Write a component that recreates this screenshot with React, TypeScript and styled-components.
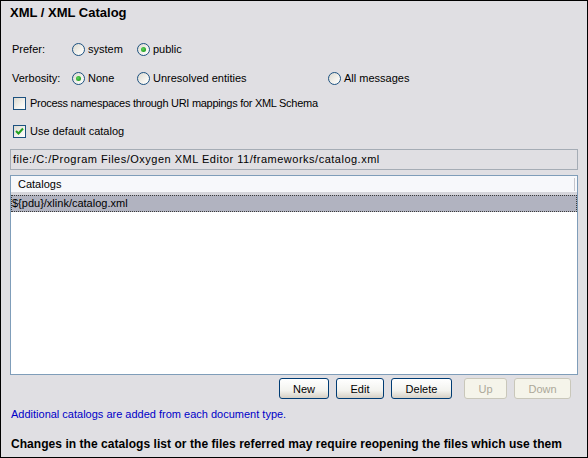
import React from "react";
import styled, { createGlobalStyle } from "styled-components";

const Global = createGlobalStyle`
  html, body { margin: 0; padding: 0; background: #e0dfe3; }
  * { box-sizing: border-box; }
`;

const Frame = styled.div`
  width: 588px;
  height: 458px;
  border: 1px solid #000;
  background: #e0dfe3;
  font-family: "Liberation Sans", Arial, sans-serif;
  font-size: 11px;
  color: #000;
  display: flex;
  flex-direction: column;
  padding: 0 9px 0 9px;
`;

const Title = styled.div`
  font-weight: bold;
  font-size: 13px;
  height: 22px;
  padding-top: 1px;
  line-height: 21px;
`;

const OptionRow = styled.div<{ $top: number }>`
  display: grid;
  grid-template-columns: 60px 65px 191px auto;
  align-items: center;
  height: 16px;
  margin-top: ${(p) => p.$top}px;
  padding-left: 2px;
`;

const RowLabel = styled.span``;

const Choice = styled.label`
  display: flex;
  align-items: center;
  gap: 3px;
  white-space: nowrap;
`;

const RadioDot = styled.span<{ $on?: boolean }>`
  width: 13px;
  height: 13px;
  border-radius: 50%;
  border: 1px solid #1c5180;
  background: linear-gradient(135deg, #dcd9d0 0%, #f4f3ee 60%, #ffffff 100%);
  display: flex;
  align-items: center;
  justify-content: center;
  &::after {
    content: "";
    display: ${(p) => (p.$on ? "block" : "none")};
    width: 5px;
    height: 5px;
    border-radius: 50%;
    background: radial-gradient(circle at 40% 40%, #5ed25e, #21a121 70%);
  }
`;

const CheckRow = styled.label<{ $top: number; $track?: number }>`
  display: flex;
  align-items: center;
  gap: 4px;
  height: 16px;
  margin-top: ${(p) => p.$top}px;
  padding-left: 3px;
  letter-spacing: ${(p) => p.$track ?? 0}px;
`;

const CheckBox = styled.span`
  width: 13px;
  height: 13px;
  flex: none;
  border: 1px solid #1c5180;
  background: linear-gradient(135deg, #dcd9d0 0%, #f4f3ee 60%, #ffffff 100%);
  display: flex;
  align-items: center;
  justify-content: center;
`;

const PathField = styled.div`
  margin-top: 10px;
  height: 21px;
  border: 1px solid #a5acb5;
  padding-left: 2px;
  line-height: 19px;
  letter-spacing: 0.5px;
`;

const Table = styled.div`
  margin-top: 5px;
  height: 200px;
  border: 1px solid #7f9db9;
  background: #fff;
  display: flex;
  flex-direction: column;
`;

const HeaderCell = styled.div`
  height: 19px;
  background: #f7f8fb;
  border-bottom: 3px solid #d6d6dc;
  padding-left: 7px;
  line-height: 17px;
  display: flex;
  align-items: center;
  justify-content: space-between;
  &::after {
    content: "";
    width: 1px;
    height: 13px;
    background: #c5c5cb;
    margin-right: 2px;
  }
`;

const SelectedRow = styled.div`
  height: 17px;
  background: #b1b3c0;
  border: 1px dotted #3c3c3c;
  line-height: 15px;
`;

const ButtonBar = styled.div`
  margin-top: 3px;
  height: 21px;
  display: flex;
  align-items: flex-start;
  justify-content: flex-end;
  padding-right: 7px;
  gap: 7px;
`;

const Btn = styled.button<{ $w: number; $disabled?: boolean; $gap?: number }>`
  width: ${(p) => p.$w}px;
  height: 21px;
  margin: 0 0 0 ${(p) => p.$gap ?? 0}px;
  font-family: "Liberation Sans", Arial, sans-serif;
  font-size: 11px;
  border-radius: 3px;
  padding: 0;
  border: 1px solid ${(p) => (p.$disabled ? "#c9c7ba" : "#003c74")};
  color: ${(p) => (p.$disabled ? "#aca899" : "#000")};
  background: ${(p) =>
    p.$disabled
      ? "#f5f4ea"
      : "linear-gradient(180deg, #ffffff 0%, #f3f3ef 60%, #d6d0c5 100%)"};
`;

const Note = styled.div`
  margin-top: 8px;
  color: #0000c8;
  padding-left: 1px;
  height: 14px;
  line-height: 14px;
`;

const Warning = styled.div`
  margin-top: 16px;
  font-weight: bold;
  padding-left: 1px;
  font-size: 12px;
  line-height: 14px;
  letter-spacing: 0.05px;
`;

const Radio = ({ on, children }: { on?: boolean; children: React.ReactNode }) => (
  <Choice>
    <RadioDot $on={on} />
    {children}
  </Choice>
);

export default function App() {
  return (
    <>
      <Global />
      <Frame>
        <Title>XML / XML Catalog</Title>
        <OptionRow $top={18}>
          <RowLabel>Prefer:</RowLabel>
          <Radio>system</Radio>
          <Radio on>public</Radio>
        </OptionRow>
        <OptionRow $top={13}>
          <RowLabel>Verbosity:</RowLabel>
          <Radio on>None</Radio>
          <Radio>Unresolved entities</Radio>
          <Radio>All messages</Radio>
        </OptionRow>
        <CheckRow $top={9} $track={-0.28}>
          <CheckBox />
          Process namespaces through URI mappings for XML Schema
        </CheckRow>
        <CheckRow $top={12}>
          <CheckBox>
            <svg width="9" height="9" viewBox="0 0 9 9">
              <path d="M1 4 L3.5 6.5 L8 1.5" fill="none" stroke="#21a121" strokeWidth="2" />
            </svg>
          </CheckBox>
          Use default catalog
        </CheckRow>
        <PathField>file:/C:/Program Files/Oxygen XML Editor 11/frameworks/catalog.xml</PathField>
        <Table>
          <HeaderCell>Catalogs</HeaderCell>
          <SelectedRow>{"${pdu}/xlink/catalog.xml"}</SelectedRow>
        </Table>
        <ButtonBar>
          <Btn $w={50}>New</Btn>
          <Btn $w={48}>Edit</Btn>
          <Btn $w={61}>Delete</Btn>
          <Btn $w={43} $disabled $gap={5}>Up</Btn>
          <Btn $w={57} $disabled>Down</Btn>
        </ButtonBar>
        <Note>Additional catalogs are added from each document type.</Note>
        <Warning>Changes in the catalogs list or the files referred may require reopening the files which use them</Warning>
      </Frame>
    </>
  );
}
